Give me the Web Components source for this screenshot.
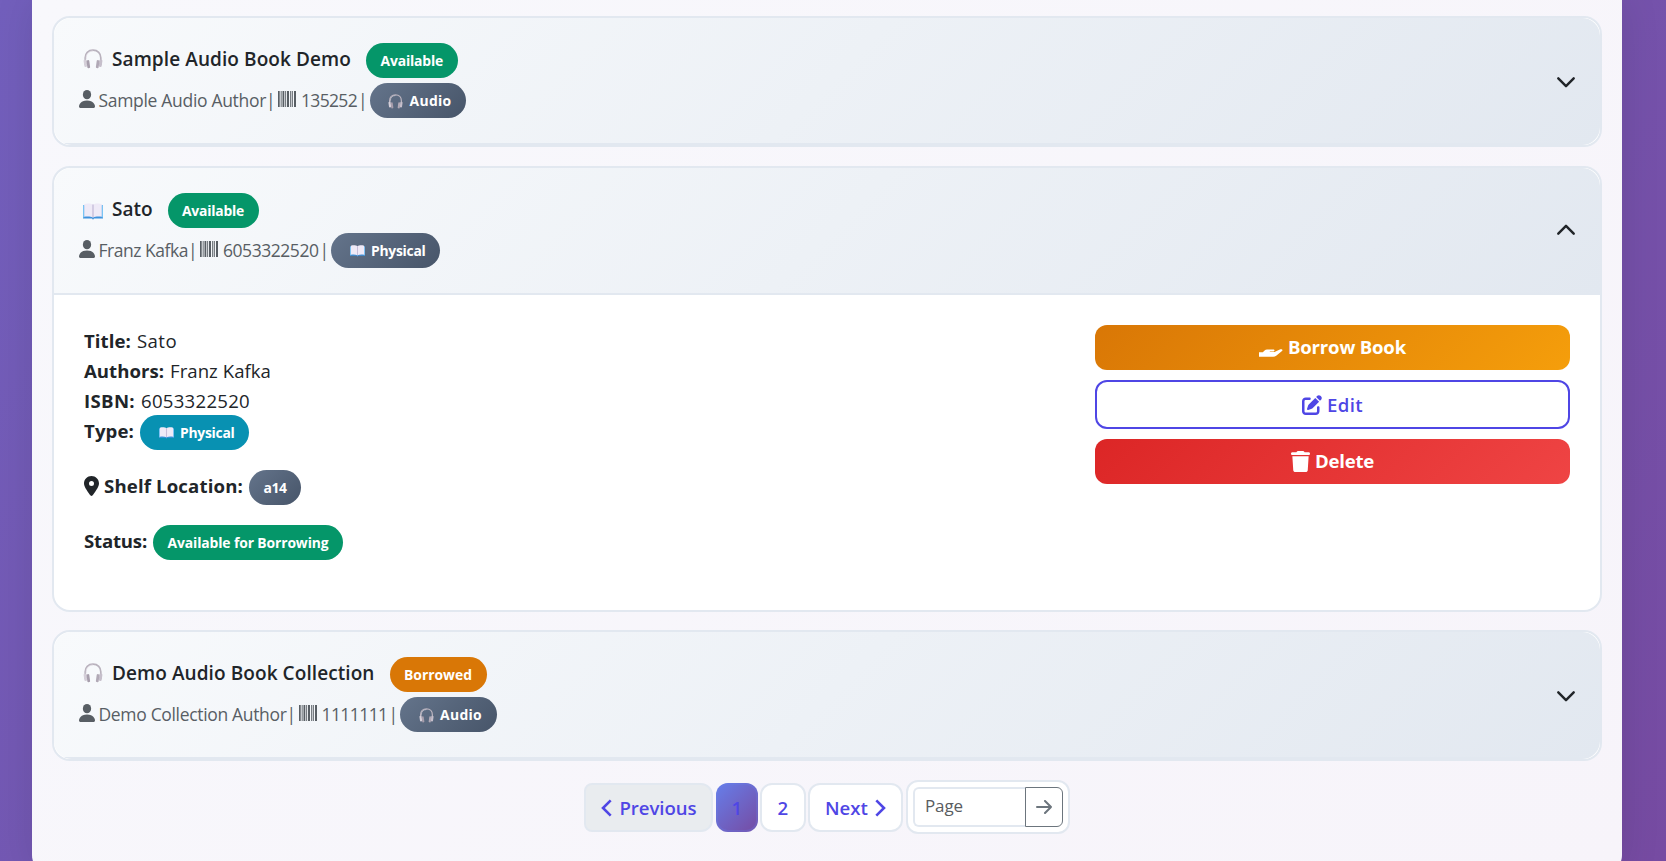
<!DOCTYPE html>
<html lang="en"><head><meta charset="utf-8"><title>Library</title>
<style>
html,body{margin:0;height:861px;overflow:hidden}
body{font-family:"Open Sans","Noto Sans",sans-serif;color:#212529;background:linear-gradient(135deg,#725fbc 0%,#764ba2 100%)}
</style></head><body>
<library-page>
<book-card kind="audio" name="Sample Audio Book Demo" nw="239" author="Sample Audio Author" aw="167.5" isbn="135252" iw="56" status="Available" sw="62.5"></book-card>
<book-card kind="physical" open name="Sato" nw="40.5" author="Franz Kafka" aw="89.5" isbn="6053322520" iw="95.5" status="Available" sw="62"><book-details></book-details></book-card>
<book-card kind="audio" name="Demo Audio Book Collection" nw="262.5" author="Demo Collection Author" aw="188" isbn="1111111" iw="66" status="Borrowed" sw="68"></book-card>
<page-nav></page-nav>
</library-page>
<script>
const ICONS={
headphones:['0 0 20 20','<path d="M2.2 16V8.8C2.2 4.5 5.2 1.2 10 1.2s7.8 3.3 7.8 7.6V16" fill="none" stroke="#b9b2bd" stroke-width="1.700"/><path d="M3.2 10V8.6C3.2 5 6 2 10 2" fill="none" stroke="#e2dde5" stroke-width=".7"/><rect x=".9" y="10.5" width="3" height="7.5" rx="1.4" fill="#d5cfd9" transform="rotate(-8 2 14)"/><rect x="3.900" y="11.200" width="2.800" height="8" rx="1" fill="#a79eac" transform="rotate(-8 5 15)"/><rect x="16.1" y="10.5" width="3" height="7.5" rx="1.4" fill="#c6bfcb" transform="rotate(8 18 14)"/><rect x="13.300" y="11.200" width="2.800" height="8" rx="1" fill="#b1a9b6" transform="rotate(8 15 15)"/>'],
book:['0 0 20 17','<path d="M0 2.2h20v13.2H11l-1 1.3-1-1.3H0z" fill="#3f92dd"/><path d="M0 2.2h1.2v12.2H0zM18.8 2.2H20v12.2h-1.2z" fill="#79c4f4"/><path d="M1.2 1C4 .2 8 .2 10 1.6 12 .2 16 .2 18.8 1v12.8c-3-.5-6.500-.5-8.800.8-2.300-1.300-5.800-1.300-8.800-.8z" fill="#efeaf7"/><path d="M9.300 1.300 10 1.700l.7-.4v12.900l-.7.4-.7-.4z" fill="#c8bfda"/>'],
person:['2 2 12 12','<path fill="currentColor" d="M3 14s-1 0-1-1 1-4 6-4 6 3 6 4-1 1-1 1z"/><circle fill="currentColor" cx="8" cy="5.1" r="3.100"/>'],
barcode:['0 0 18 16','<path fill="currentColor" d="M0 0h1.700v16H0zM2.700 0h.9v16h-.9zM4.500 0h1.800v16H4.500zM7.200 0h.9v16h-.9zM9 0h2v16H9zM12.200 0h.8v16h-.8zM13.700 0h1.100v16h-1.100zM16 0h2v16h-2z"/>'],
pin:['0 0 384 512','<path fill="currentColor" fill-rule="evenodd" d="M215.700 499.200C267 435 384 279.400 384 192 384 86 298 0 192 0S0 86 0 192c0 87.400 117 243 168.300 307.200 12.300 15.300 35.100 15.300 47.400 0zM192 128a64 64 0 1 1 0 128 64 64 0 1 1 0-128z"/>'],
hand:['0 0 24 9','<path fill="currentColor" d="M0 3.300h3.800L5.600 1.400Q6.600.6 8 .6h6.300c1.500 0 1.700 1.700.3 1.900h-3.800v.5h4.800l5.200-2.600c1.400-.7 2.800.1 2.800.7 0 .5-.3.700-.6 1l-5.800 4.700q-1.300 1-3 1H0z"/>'],
edit:['0 0 512 512','<path fill="currentColor" d="M471.600 21.700c-21.900-21.900-57.300-21.900-79.200 0L362.300 51.700l97.900 97.900 30.100-30.100c21.900-21.900 21.900-57.300 0-79.200L471.600 21.700zm-299.200 220c-6.100 6.100-10.800 13.600-13.500 21.900l-29.600 88.800c-2.900 8.600-.6 18.100 5.800 24.600s15.900 8.700 24.600 5.800l88.800-29.600c8.200-2.700 15.700-7.400 21.900-13.500L437.700 172.300 339.700 74.300 172.400 241.700zM96 64C43 64 0 107 0 160V416c0 53 43 96 96 96H352c53 0 96-43 96-96V320c0-17.700-14.300-32-32-32s-32 14.300-32 32v96c0 17.700-14.300 32-32 32H96c-17.700 0-32-14.300-32-32V160c0-17.700 14.300-32 32-32h96c17.700 0 32-14.300 32-32s-14.300-32-32-32H96z"/>'],
trash:['0 0 448 512','<path fill="currentColor" d="M135.200 17.700 128 32H32C14.300 32 0 46.300 0 64s14.300 32 32 32h384c17.700 0 32-14.300 32-32s-14.300-32-32-32h-96l-7.200-14.300C307.400 6.800 296.300 0 284.200 0H163.800c-12.100 0-23.200 6.800-28.600 17.700zM416 128H32l21.200 339c1.600 25.300 22.600 45 47.900 45h245.800c25.300 0 46.300-19.700 47.900-45z"/>'],
left:['0 0 11 18','<path d="M9.700 1.300 2 9l7.700 7.700" fill="none" stroke="currentColor" stroke-width="2.600"/>'],
right:['0 0 11 18','<path d="M1.300 1.300 9 9l-7.700 7.700" fill="none" stroke="currentColor" stroke-width="2.600"/>'],
arrow:['0 0 16 14','<path d="M1 7h14M9 1l6 6-6 6" fill="none" stroke="currentColor" stroke-width="2" stroke-linecap="round" stroke-linejoin="round"/>'],
down:['0 0 18 11','<path d="m1.300 1.300 7.700 7.900 7.700-7.900" fill="none" stroke="currentColor" stroke-width="2.400" stroke-linecap="round" stroke-linejoin="round"/>'],
up:['0 0 18 11','<path d="m1.300 9.700 7.700-7.900 7.700 7.900" fill="none" stroke="currentColor" stroke-width="2.400" stroke-linecap="round" stroke-linejoin="round"/>']};
const define=(n,f,after)=>customElements.define(n,class extends HTMLElement{
 connectedCallback(){if(this.shadowRoot)return;this.attachShadow({mode:'open'}).innerHTML=f(this);if(after)after(this)}});
const A=(e,n)=>e.getAttribute(n);

define('ui-icon',e=>{const i=ICONS[A(e,'name')];return `<style>:host{display:block;flex:none;width:${A(e,'w')}px;height:${A(e,'h')}px}svg{display:block;width:100%;height:100%}</style><svg viewBox="${i[0]}" preserveAspectRatio="none">${i[1]}</svg>`});

/* A single run of text tracked to fill its measure. */
define('ui-text',e=>`<style>:host{display:block;flex:none;white-space:nowrap;width:${A(e,'w')}px;font-size:${A(e,'s')||18.6}px;line-height:28px}</style><span><slot></slot></span>`,
e=>{const s=e.shadowRoot.querySelector('span'),w=+A(e,'w'),n=e.textContent.length;s.style.letterSpacing=(w-s.getBoundingClientRect().width)/n+'px'});

define('ui-badge',e=>{const c={green:'#059669',orange:'#d97706',cyan:'#0891b2',slate:'linear-gradient(135deg,#64748b,#475569)'}[A(e,'tone')];
return `<style>:host{display:flex;flex:none;box-sizing:border-box;align-items:center;height:35px;padding:0 14.500px;border-radius:20px;background:${c};color:#fff}ui-text{font-weight:700}ui-icon{margin:1px 6.500px 0 4px}</style>${A(e,'icon')?`<ui-icon name="${A(e,'icon')}" w="15" h="${A(e,'icon')=='book'?12:15}"></ui-icon>`:''}<ui-text s="13.900" w="${A(e,'w')}">${A(e,'label')}</ui-text>`});

define('book-card',e=>{const au=A(e,'kind')=='audio',ic=au?'headphones':'book',open=e.hasAttribute('open');return `<style>
:host{display:block;box-sizing:border-box;border:2px solid #e2e8f0;border-radius:18px;background:#fff;overflow:hidden}
header{display:flex;box-sizing:border-box;align-items:center;justify-content:space-between;height:127px;padding:25px 25px 27px;border-radius:${open?'18px 18px 0 0':'18px'};background:linear-gradient(#e2e8f0,#e2e8f0) 0 100%/100% 2px no-repeat,linear-gradient(135deg,#f8fafc,#e2e8f0)}
.r{display:flex;align-items:center;height:35px}.r+.r{margin-top:5px;color:#585e64}
.n{font-weight:600;margin-bottom:3px}.r ui-badge{margin-left:15px}.r+.r ui-badge{margin-left:1.500px}.m{margin-bottom:2px}
.chev{${open?'margin-bottom:2px':'margin-top:3px'}}
.info{align-self:flex-start}</style>
<header><div class="info"><div class="r"><ui-icon name="${ic}" w="20" h="${au?20:17}" style="margin:${au?'0 9px 3px 4px':'2px 9px 0 4px'}"></ui-icon><ui-text class="n" s="19" w="${A(e,'nw')}">${A(e,'name')}</ui-text><ui-badge tone="${A(e,'status')=='Borrowed'?'orange':'green'}" w="${A(e,'sw')}" label="${A(e,'status')}"></ui-badge></div>
<div class="r"><ui-icon name="person" w="16" h="18" style="margin:0 3.500px 3px 0"></ui-icon><ui-text class="m" s="17.500" w="${A(e,'aw')}">${A(e,'author')}</ui-text><ui-text class="m" s="17.500" w="10">|</ui-text><ui-icon name="barcode" w="18" h="16" style="margin:0 5px 3px 2px"></ui-icon><ui-text class="m" s="17.500" w="${A(e,'iw')}">${A(e,'isbn')}</ui-text><ui-text class="m" s="17.500" w="10" style="margin-left:1px">|</ui-text><ui-badge tone="slate" icon="${ic}" w="${au?42:54.500}" label="${au?'Audio':'Physical'}"></ui-badge></div></div>
<ui-icon class="chev" name="${open?'up':'down'}" w="18" h="11"></ui-icon></header><slot></slot>`});

define('ui-button',e=>{const k=A(e,'kind');return `<style>:host{display:flex;box-sizing:border-box;align-items:center;justify-content:center;gap:5px;height:${k=='edit'?49:45}px;border-radius:12px;font-weight:${k=='edit'?600:700};color:#fff;${{borrow:'background:linear-gradient(135deg,#d97706,#f59e0b)',edit:'background:#fff;border:2px solid #4f46e5;color:#4f46e5',del:'background:linear-gradient(135deg,#dc2626,#ef4444)'}[k]}}</style><slot></slot>`});

define('book-details',e=>`<style>:host{display:flex;justify-content:space-between;padding:30px 30px 50px;box-sizing:border-box;height:315px}
.f{padding-top:1px}.r{display:flex;align-items:center;height:30px;gap:6px}.t{height:35px}.l{font-weight:700}
.acts{display:flex;flex-direction:column;gap:10px;width:475px}.t .l{margin-bottom:3px}</style>
<div class="f"><div class="r"><ui-text class="l" w="47">Title:</ui-text><ui-text w="40">Sato</ui-text></div>
<div class="r"><ui-text class="l" w="80">Authors:</ui-text><ui-text w="101">Franz Kafka</ui-text></div>
<div class="r"><ui-text class="l" w="51">ISBN:</ui-text><ui-text w="109">6053322520</ui-text></div>
<div class="r"><ui-text class="l" w="50">Type:</ui-text><ui-badge style="margin-top:3px" tone="cyan" icon="book" w="54.500" label="Physical"></ui-badge></div>
<div class="r t" style="margin-top:24px"><ui-icon name="pin" w="15" h="20" style="margin-bottom:4px"></ui-icon><ui-text class="l" w="139" style="margin-left:-1px">Shelf Location:</ui-text><ui-badge tone="slate" w="23" label="a14"></ui-badge></div>
<div class="r t" style="margin-top:20px"><ui-text class="l" w="63">Status:</ui-text><ui-badge tone="green" w="161" label="Available for Borrowing"></ui-badge></div></div>
<div class="acts"><ui-button kind="borrow"><ui-icon name="hand" w="24" h="9" style="margin-top:11px"></ui-icon><ui-text w="118" style="margin-bottom:1px">Borrow Book</ui-text></ui-button>
<ui-button kind="edit"><ui-icon name="edit" w="20" h="20"></ui-icon><ui-text w="36">Edit</ui-text></ui-button>
<ui-button kind="del"><ui-icon name="trash" w="19" h="21"></ui-icon><ui-text w="59" style="margin-bottom:1px">Delete</ui-text></ui-button></div>`);

define('page-nav',e=>`<style>:host{display:flex;align-items:center;justify-content:center;height:54px;color:#4f46e5;font-weight:600}
.b{display:flex;box-sizing:border-box;align-items:center;justify-content:center;height:49px;border:2px solid #e2e8f0;border-radius:12px;background:#fff;margin-top:1px}
.p{width:129px;background:#e9ecef;border-radius:8px 12px 12px 8px;margin-right:3px;gap:8px}
.a{width:42px;border:0;background:linear-gradient(135deg,#667eea,#764ba2);box-shadow:inset 0 0 0 2px #667eea40;margin-right:2px}
.two{width:46px;margin-right:2px}.x{width:95px;gap:7px;margin-right:3px}
.g{display:flex;box-sizing:border-box;width:164px;height:54px;padding:5px;border:2px solid #e2e8f0;border-radius:12px;background:#fff;font-weight:400;color:#595c5f}
.in{flex:1;display:flex;align-items:center;border:2px solid #e2e8f0;border-right:0;border-radius:6px 0 0 6px;padding-left:10px}
.in ui-text{margin-top:-2px}
.go{display:flex;box-sizing:border-box;align-items:center;justify-content:center;width:38px;border:1px solid #6c757d;border-radius:0 6px 6px 0;color:#6c757d}</style>
<div class="b p"><ui-icon name="left" w="11" h="18"></ui-icon><ui-text w="77">Previous</ui-text></div>
<div class="b a"><ui-text w="11">1</ui-text></div><div class="b two"><ui-text w="11">2</ui-text></div>
<div class="b x"><ui-text w="43">Next</ui-text><ui-icon name="right" w="11" h="18"></ui-icon></div>
<div class="g"><div class="in"><ui-text s="17" w="38">Page</ui-text></div><div class="go"><ui-icon name="arrow" w="16" h="14"></ui-icon></div></div>`);

define('library-page',e=>`<style>:host{display:block;box-sizing:border-box;width:1590px;height:875px;margin-left:32px;padding:16px 20px 0;background:linear-gradient(135deg,#f8f8fc,#f7f4fa);border-radius:0 0 20px 20px;box-shadow:0 0 40px rgba(0,0,0,.1)}
::slotted(book-card){margin-bottom:19px;width:1550px}::slotted(book-card[open]){margin-bottom:18px}</style><slot></slot>`);
</script></body></html>
